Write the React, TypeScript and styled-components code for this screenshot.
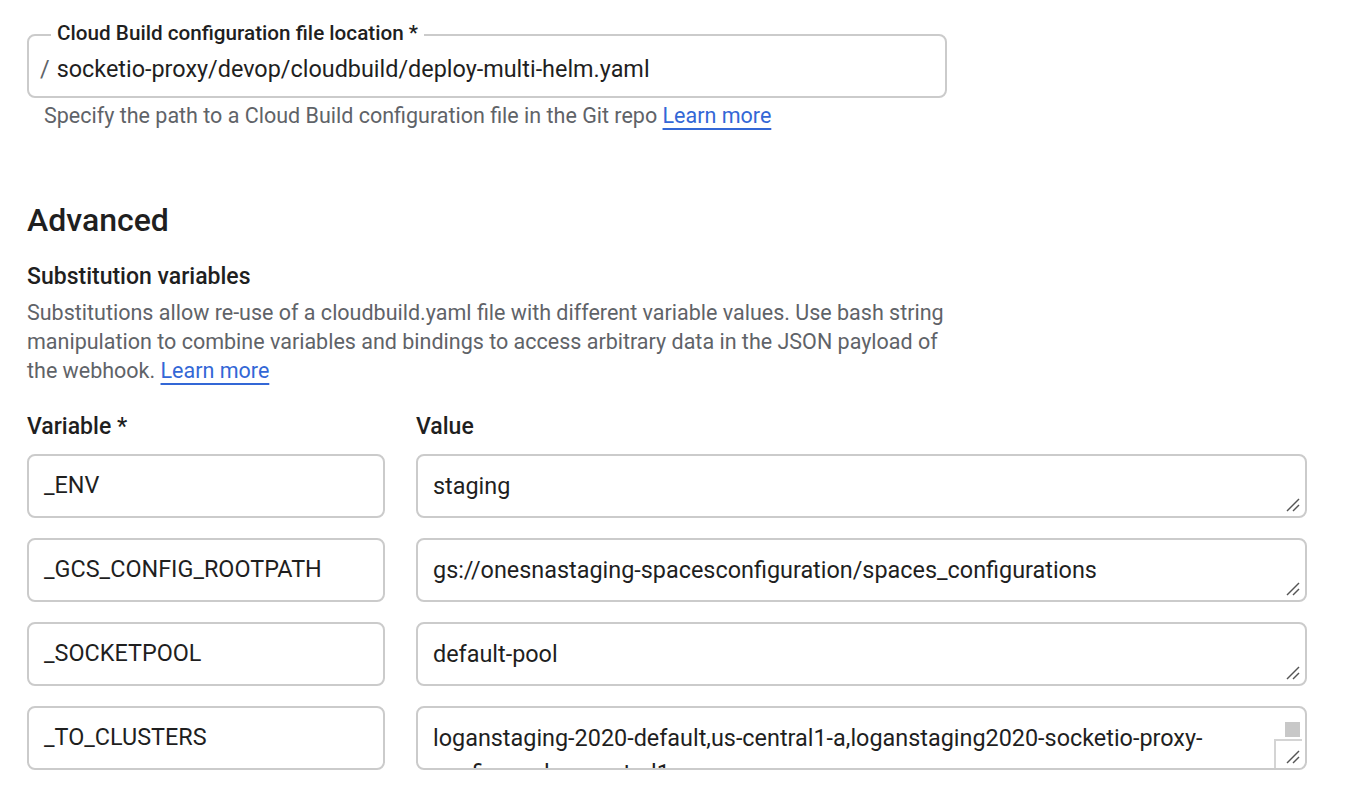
import React from "react";
import styled, { createGlobalStyle } from "styled-components";

const GlobalStyle = createGlobalStyle`
  html, body { margin: 0; padding: 0; background: #ffffff; }
  body { font-family: Roboto, "Liberation Sans", Arial, sans-serif; color: #202124; }
  * { box-sizing: border-box; }
`;

const Page = styled.main`
  display: flex;
  flex-direction: column;
  padding: 23px 0 0 27px;
  width: 1366px;
  height: 802px;
  overflow: hidden;
`;

const OutlinedField = styled.fieldset`
  width: 920px;
  margin: 0;
  padding: 8px 12px 13px 11px;
  border: 2px solid #cbcbcb;
  border-radius: 8px;
  min-inline-size: 0;
`;

const Legend = styled.legend`
  margin-left: 11px;
  padding: 0 6px 4px;
  font-size: 20.7px;
  line-height: 20px;
  font-weight: 500;
  color: #1f1f1f;
`;

const FieldValue = styled.div`
  display: flex;
  gap: 7px;
  font-size: 23.4px;
  line-height: 28px;
  color: #1f1f1f;
`;

const Prefix = styled.span`
  color: #5f6368;
`;

const Hint = styled.p`
  margin: 6px 0 0 17px;
  font-size: 21.5px;
  line-height: 24px;
  color: #5f6368;
`;

const Link = styled.a`
  color: #3367d6;
  text-decoration: underline;
  text-decoration-thickness: 2px;
  text-underline-offset: 5px;
  cursor: pointer;
`;

const Heading = styled.h2`
  margin: 74px 0 0;
  font-size: 32px;
  line-height: 36px;
  font-weight: 500;
  color: #1f1f1f;
`;

const SubHeading = styled.h3`
  margin: 27px 0 0;
  font-size: 23px;
  line-height: 24px;
  font-weight: 500;
  color: #1f1f1f;
`;

const Description = styled.p`
  margin: 9px 0 0;
  width: 930px;
  font-size: 21.5px;
  line-height: 29px;
  color: #5f6368;
`;

const Grid = styled.div`
  display: grid;
  grid-template-columns: 358px 891px;
  column-gap: 31px;
  row-gap: 20px;
  margin-top: 30px;
`;

const ColumnLabel = styled.div`
  font-size: 23px;
  line-height: 24px;
  font-weight: 500;
  color: #1f1f1f;
  margin-bottom: -5px;
`;

const Box = styled.div<{ $multiline?: boolean }>`
  position: relative;
  height: 64px;
  border: 2px solid #cbcbcb;
  border-radius: 8px;
  padding: ${(p) => (p.$multiline ? "13px 40px 0 15px" : "14px 15px 0 15px")};
  font-size: 23.4px;
  line-height: ${(p) => (p.$multiline ? "35px" : "30px")};
  color: #1f1f1f;
  overflow: hidden;
  white-space: ${(p) => (p.$multiline ? "normal" : "nowrap")};
`;

const Grip = styled.svg`
  position: absolute;
  right: 5px;
  bottom: 4px;
  width: 14px;
  height: 14px;
`;

const ScrollThumb = styled.div`
  position: absolute;
  right: 5px;
  top: 14px;
  width: 15px;
  height: 15px;
  background: #c8c8c8;
`;

const ScrollCorner = styled.div`
  position: absolute;
  right: 3px;
  bottom: 0;
  width: 28px;
  height: 29px;
  background: #ffffff;
  border-left: 2px solid #d4d4d4;
  border-top: 2px solid #d4d4d4;
`;

const ResizeGrip = () => (
  <Grip viewBox="0 0 14 14">
    <line x1="1" y1="13" x2="13" y2="1" stroke="#555" strokeWidth="1.4" />
    <line x1="7" y1="13" x2="13" y2="7" stroke="#555" strokeWidth="1.4" />
  </Grip>
);

const rows = [
  { name: "_ENV", value: "staging" },
  { name: "_GCS_CONFIG_ROOTPATH", value: "gs://onesnastaging-spacesconfiguration/spaces_configurations" },
  { name: "_SOCKETPOOL", value: "default-pool" },
  {
    name: "_TO_CLUSTERS",
    value: "loganstaging-2020-default,us-central1-a,loganstaging2020-socketio-proxy-config-pool,us-central1-a",
    scroll: true,
  },
];

export default function App() {
  return (
    <>
      <GlobalStyle />
      <Page>
        <OutlinedField>
          <Legend>Cloud Build configuration file location *</Legend>
          <FieldValue>
            <Prefix>/</Prefix>
            <span>socketio-proxy/devop/cloudbuild/deploy-multi-helm.yaml</span>
          </FieldValue>
        </OutlinedField>
        <Hint>
          Specify the path to a Cloud Build configuration file in the Git repo <Link>Learn more</Link>
        </Hint>

        <Heading>Advanced</Heading>
        <SubHeading>Substitution variables</SubHeading>
        <Description>
          Substitutions allow re-use of a cloudbuild.yaml file with different variable values. Use bash string
          manipulation to combine variables and bindings to access arbitrary data in the JSON payload of the
          webhook. <Link>Learn more</Link>
        </Description>

        <Grid>
          <ColumnLabel>Variable *</ColumnLabel>
          <ColumnLabel>Value</ColumnLabel>
          {rows.map((r) => (
            <React.Fragment key={r.name}>
              <Box>{r.name}</Box>
              <Box $multiline>
                {r.value}
                {r.scroll && <ScrollThumb />}
                {r.scroll && <ScrollCorner />}
                <ResizeGrip />
              </Box>
            </React.Fragment>
          ))}
        </Grid>
      </Page>
    </>
  );
}
